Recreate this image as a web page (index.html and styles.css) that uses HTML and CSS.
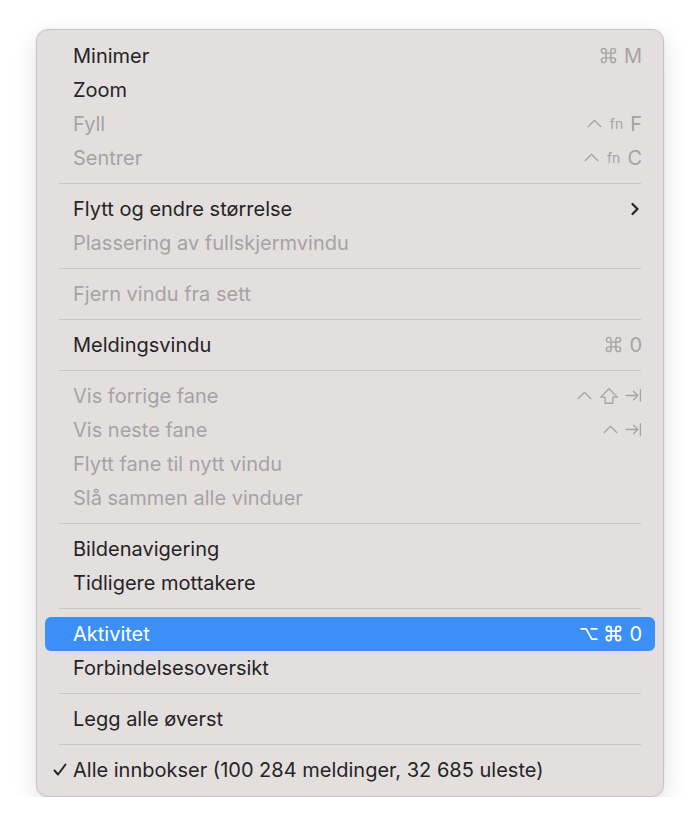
FILE: index.html
```html
<!DOCTYPE html>
<html lang="nb">
  <head>
    <meta charset="UTF-8" />
    <title>Vindu</title>
    <link rel="stylesheet" href="styles.css">
  </head>
  <body>
    <div class="menu">
      <div class="item"><span class="label">Minimer</span>
        <span class="keys">
          <svg class="sym cmd" viewBox="0 0 16 16"><path d="M6 4 A2 2 0 1 0 4 6 H12 A2 2 0 1 0 10 4 V12 A2 2 0 1 0 12 10 H4 A2 2 0 1 0 6 12 Z"/></svg>
          <span>M</span>
        </span>
      </div>
      <div class="item"><span class="label">Zoom</span></div>
      <div class="item disabled"><span class="label">Fyll</span>
        <span class="keys">
          <svg class="sym ctrl" viewBox="0 0 16 16"><path d="M2 11 L8 5 L14 11"/></svg>
          <span class="fn">fn</span><span>F</span>
        </span>
      </div>
      <div class="item disabled"><span class="label">Sentrer</span>
        <span class="keys">
          <svg class="sym ctrl" viewBox="0 0 16 16"><path d="M2 11 L8 5 L14 11"/></svg>
          <span class="fn">fn</span><span>C</span>
        </span>
      </div>
      <div class="sep"></div>
      <div class="item"><span class="label">Flytt og endre størrelse</span>
        <svg class="chevron" width="8" height="14" viewBox="0 0 8 14"><path d="M1.5 2 L6.5 7 L1.5 12"/></svg>
      </div>
      <div class="item disabled"><span class="label">Plassering av fullskjermvindu</span></div>
      <div class="sep"></div>
      <div class="item disabled"><span class="label">Fjern vindu fra sett</span></div>
      <div class="sep"></div>
      <div class="item"><span class="label">Meldingsvindu</span>
        <span class="keys">
          <svg class="sym cmd" viewBox="0 0 16 16"><path d="M6 4 A2 2 0 1 0 4 6 H12 A2 2 0 1 0 10 4 V12 A2 2 0 1 0 12 10 H4 A2 2 0 1 0 6 12 Z"/></svg>
          <span>0</span>
        </span>
      </div>
      <div class="sep"></div>
      <div class="item disabled"><span class="label">Vis forrige fane</span>
        <span class="keys">
          <svg class="sym ctrl" viewBox="0 0 16 16"><path d="M2 11 L8 5 L14 11"/></svg>
          <svg class="sym shift" viewBox="0 0 18 16"><path d="M9 1.5 L16.5 9 H12.5 V14.5 H5.5 V9 H1.5 Z"/></svg>
          <svg class="sym tab" viewBox="0 0 16 16"><path d="M1 8 H12 M8 4 L12 8 L8 12 M14.5 2.5 V13.5"/></svg>
        </span>
      </div>
      <div class="item disabled"><span class="label">Vis neste fane</span>
        <span class="keys">
          <svg class="sym ctrl" viewBox="0 0 16 16"><path d="M2 11 L8 5 L14 11"/></svg>
          <svg class="sym tab" viewBox="0 0 16 16"><path d="M1 8 H12 M8 4 L12 8 L8 12 M14.5 2.5 V13.5"/></svg>
        </span>
      </div>
      <div class="item disabled"><span class="label">Flytt fane til nytt vindu</span></div>
      <div class="item disabled"><span class="label">Slå sammen alle vinduer</span></div>
      <div class="sep"></div>
      <div class="item"><span class="label">Bildenavigering</span></div>
      <div class="item"><span class="label">Tidligere mottakere</span></div>
      <div class="sep"></div>
      <div class="item active"><span class="label">Aktivitet</span>
        <span class="keys">
          <svg class="sym opt" viewBox="0 0 16 16"><path d="M1 3.5 H5.5 L10.5 12.5 H15 M10 3.5 H15"/></svg>
          <svg class="sym cmd" viewBox="0 0 16 16"><path d="M6 4 A2 2 0 1 0 4 6 H12 A2 2 0 1 0 10 4 V12 A2 2 0 1 0 12 10 H4 A2 2 0 1 0 6 12 Z"/></svg>
          <span>0</span>
        </span>
      </div>
      <div class="item"><span class="label">Forbindelsesoversikt</span></div>
      <div class="sep"></div>
      <div class="item"><span class="label">Legg alle øverst</span></div>
      <div class="sep"></div>
      <div class="item">
        <svg class="check" viewBox="0 0 14 14"><path d="M1.5 7.5 L5 11.5 L12.5 1.5"/></svg>
        <span class="label">Alle innbokser (100 284 meldinger, 32 685 uleste)</span>
      </div>
    </div>
  </body>
</html>
```
FILE: styles.css
```css
* {
  box-sizing: border-box;
  margin: 0;
  padding: 0;
}
body {
  font-family: Inter, "Noto Sans", sans-serif;
  background: #fff;
  color: #262424;
  padding: 29px 0 0 36px;
}
.menu {
  width: 628px;
  padding: 9px 8px;
  background: #e3dfdf;
  border: 1px solid #c8c5c5;
  border-radius: 12px;
  box-shadow: 0 8px 24px rgba(0, 0, 0, 0.12), 0 0 2px rgba(0, 0, 0, 0.08);
}
.item {
  position: relative;
  display: flex;
  align-items: center;
  height: 34px;
  padding: 0 13px 1px 28px;
  border-radius: 6px;
  font-size: 20px;
}
.label {
  flex: 1;
}
.disabled {
  color: #a6a3a3;
}
.keys {
  display: flex;
  align-items: center;
  gap: 6px;
  color: #a6a3a3;
  font-size: 20px;
}
.sym {
  fill: none;
  stroke: currentColor;
  stroke-width: 1.2;
  stroke-linecap: round;
  stroke-linejoin: round;
}
.cmd {
  width: 19px;
  height: 19px;
}
.ctrl {
  width: 17px;
  height: 17px;
}
.shift {
  width: 20px;
  height: 18px;
}
.tab {
  width: 17px;
  height: 17px;
}
.opt {
  width: 18px;
  height: 18px;
}
.fn {
  font-size: 14px;
  margin: 0 1px;
}
.chevron {
  fill: none;
  stroke: #262424;
  stroke-width: 2.2;
  stroke-linecap: round;
  stroke-linejoin: round;
  margin-right: 3px;
}
.active {
  background: #3b8ff7;
  color: #fff;
}
.active .keys {
  color: #fff;
}
.active .sym {
  stroke-width: 1.5;
}
.check {
  position: absolute;
  left: 8px;
  width: 14px;
  height: 14px;
  fill: none;
  stroke: currentColor;
  stroke-width: 2;
  stroke-linecap: round;
  stroke-linejoin: round;
}
.sep {
  height: 17px;
  display: flex;
  align-items: center;
  padding: 0 14px;
}
.sep::before {
  content: "";
  flex: 1;
  height: 1px;
  background: #c9c5c5;
}
```
